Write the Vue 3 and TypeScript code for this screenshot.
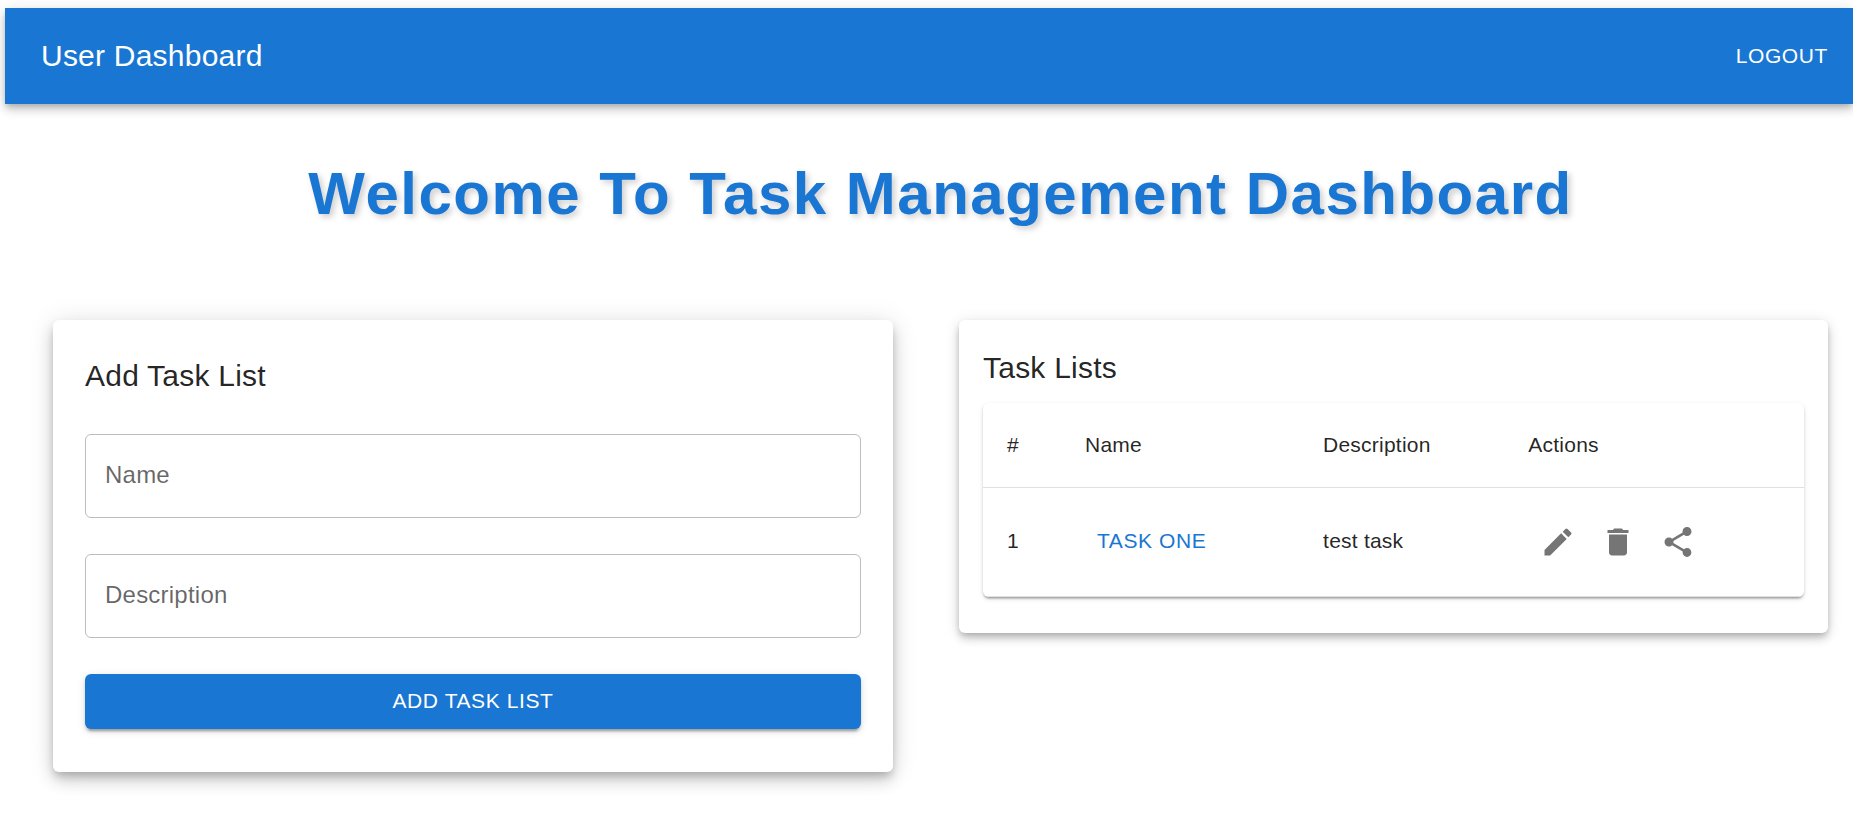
<script setup lang="ts">
import { ref } from 'vue'

interface TaskList {
  id: number
  name: string
  description: string
}

const name = ref('')
const description = ref('')
const lists = ref<TaskList[]>([{ id: 1, name: 'Task One', description: 'test task' }])

const actions = [
  {
    label: 'Edit',
    path: 'M3 17.25V21h3.75L17.81 9.94l-3.75-3.75L3 17.25zM20.71 7.04c.39-.39.39-1.02 0-1.41l-2.34-2.34a.9959.9959 0 0 0-1.41 0l-1.83 1.83 3.75 3.75 1.83-1.83z',
  },
  {
    label: 'Delete',
    path: 'M6 19c0 1.1.9 2 2 2h8c1.1 0 2-.9 2-2V7H6v12zM19 4h-3.5l-1-1h-5l-1 1H5v2h14V4z',
  },
  {
    label: 'Share',
    path: 'M18 16.08c-.76 0-1.44.3-1.96.77L8.91 12.7c.05-.23.09-.46.09-.7s-.04-.47-.09-.7l7.05-4.11c.54.5 1.25.81 2.04.81 1.66 0 3-1.34 3-3s-1.34-3-3-3-3 1.34-3 3c0 .24.04.47.09.7L8.04 9.81C7.5 9.31 6.79 9 6 9c-1.66 0-3 1.34-3 3s1.34 3 3 3c.79 0 1.5-.31 2.04-.81l7.12 4.16c-.05.21-.08.43-.08.65 0 1.61 1.31 2.92 2.92 2.92s2.92-1.31 2.92-2.92-1.31-2.92-2.92-2.92z',
  },
]

function addList() {
  if (!name.value) return
  lists.value.push({ id: lists.value.length + 1, name: name.value, description: description.value })
  name.value = ''
  description.value = ''
}
</script>

<template>
  <div class="page">
    <header class="app-bar">
      <span class="brand">User Dashboard</span>
      <button type="button" class="text-button logout">Logout</button>
    </header>

    <main class="content">
      <h1 class="welcome">Welcome To Task Management Dashboard</h1>

      <div class="columns">
        <form class="card form-card" @submit.prevent="addList">
          <h2 class="card-title">Add Task List</h2>
          <div class="fields">
            <div class="text-field" :class="{ filled: name }">
              <input id="list-name" v-model="name" type="text" />
              <label for="list-name">Name</label>
            </div>
            <div class="text-field" :class="{ filled: description }">
              <input id="list-description" v-model="description" type="text" />
              <label for="list-description">Description</label>
            </div>
            <button type="submit" class="submit">Add Task List</button>
          </div>
        </form>

        <section class="card list-card">
          <h2 class="card-title">Task Lists</h2>
          <div class="table-paper">
            <table>
              <colgroup>
                <col class="col-number" />
                <col class="col-name" />
                <col class="col-description" />
                <col />
              </colgroup>
              <thead>
                <tr>
                  <th scope="col">#</th>
                  <th scope="col">Name</th>
                  <th scope="col">Description</th>
                  <th scope="col">Actions</th>
                </tr>
              </thead>
              <tbody>
                <tr v-for="list in lists" :key="list.id">
                  <td>{{ list.id }}</td>
                  <td><button type="button" class="text-button link-button">{{ list.name }}</button></td>
                  <td>{{ list.description }}</td>
                  <td class="action-cell">
                    <div class="actions">
                      <button v-for="action in actions" :key="action.label" type="button" class="icon-button" :aria-label="action.label">
                        <svg viewBox="0 0 24 24" aria-hidden="true"><path :d="action.path" /></svg>
                      </button>
                    </div>
                  </td>
                </tr>
              </tbody>
            </table>
          </div>
        </section>
      </div>
    </main>
  </div>
</template>

<style>
body {
  margin: 0;
  background: #fff;
}
</style>

<style scoped>
.page {
  font-family: "Liberation Sans", Arial, sans-serif;
  color: rgba(0, 0, 0, 0.87);
  padding-top: 8px;
}

.page * {
  box-sizing: border-box;
}

button,
input {
  font-family: inherit;
  margin: 0;
}

button {
  border: 0;
  background: transparent;
  cursor: pointer;
}

.app-bar {
  display: flex;
  align-items: center;
  justify-content: space-between;
  min-height: 96px;
  margin-left: 5px;
  padding: 0 13px 0 36px;
  background: #1976d2;
  color: #fff;
  box-shadow: 0 3px 6px -2px rgba(0, 0, 0, 0.2), 0 6px 8px 0 rgba(0, 0, 0, 0.14), 0 2px 15px 0 rgba(0, 0, 0, 0.12);
}

.brand,
.card-title {
  font-size: 30px;
  font-weight: 400;
  line-height: 48px;
  letter-spacing: 0.0075em;
}

.text-button,
.submit {
  font-size: 21px;
  line-height: 37px;
  letter-spacing: 0.02857em;
  text-transform: uppercase;
  border-radius: 6px;
}

.text-button {
  padding: 8px 12px 10px;
}

.logout {
  color: #fff;
}

.content {
  padding: 54px 25px 43px 53px;
}

.welcome {
  margin: 0 0 90px;
  font-size: 60px;
  font-weight: 700;
  line-height: 72px;
  letter-spacing: 0.025em;
  text-align: center;
  color: #1976d2;
  text-shadow: 3px 3px 6px rgba(0, 0, 0, 0.2);
}

.columns {
  display: grid;
  grid-template-columns: minmax(0, 840fr) minmax(0, 869fr);
  gap: 66px;
  align-items: start;
}

.card {
  background: #fff;
  border-radius: 6px;
}

.card-title {
  margin: 0;
}

.form-card {
  padding: 32px 32px 43px;
  box-shadow: 0 5px 8px -2px rgba(0, 0, 0, 0.2), 0 9px 15px 0 rgba(0, 0, 0, 0.14), 0 2px 27px 0 rgba(0, 0, 0, 0.12);
}

.fields {
  display: flex;
  flex-direction: column;
  gap: 36px;
  margin-top: 34px;
}

.text-field {
  display: grid;
  align-items: center;
  justify-items: start;
}

.text-field input,
.text-field label {
  grid-area: 1 / 1;
  font-size: 24px;
  letter-spacing: 0.00938em;
}

.text-field input {
  width: 100%;
  height: 84px;
  padding: 0 20px;
  border: 1px solid rgba(0, 0, 0, 0.26);
  border-radius: 6px;
  background: transparent;
  color: inherit;
}

.text-field label {
  margin-left: 20px;
  padding-bottom: 2px;
  line-height: 36px;
  color: rgba(0, 0, 0, 0.6);
  pointer-events: none;
}

/* The label rests in the box and rises onto its border once the field is in use */
.text-field:focus-within label,
.text-field.filled label {
  align-self: start;
  margin-top: -14px;
  padding: 0 6px;
  font-size: 18px;
  line-height: 28px;
  background: #fff;
}

.submit {
  padding: 8px 24px 10px;
  background: #1976d2;
  color: #fff;
  box-shadow: 0 5px 2px -3px rgba(0, 0, 0, 0.2), 0 3px 3px 0 rgba(0, 0, 0, 0.14), 0 2px 8px 0 rgba(0, 0, 0, 0.12);
}

.list-card {
  padding: 24px 24px 36px;
  box-shadow: 0 3px 6px -2px rgba(0, 0, 0, 0.2), 0 6px 8px 0 rgba(0, 0, 0, 0.14), 0 2px 15px 0 rgba(0, 0, 0, 0.12);
}

.table-paper {
  margin-top: 11px;
  border-radius: 6px;
  overflow: hidden;
  box-shadow: 0 3px 2px -2px rgba(0, 0, 0, 0.2), 0 2px 2px 0 rgba(0, 0, 0, 0.14), 0 2px 5px 0 rgba(0, 0, 0, 0.12);
}

table {
  width: 100%;
  table-layout: fixed;
  border-collapse: collapse;
}

.col-number {
  width: 78px;
}

.col-name {
  width: 29%;
}

.col-description {
  width: 25%;
}

th,
td {
  padding: 24px;
  border-bottom: 1px solid #e0e0e0;
  font-size: 21px;
  font-weight: 400;
  line-height: 36px;
  letter-spacing: 0.01071em;
  text-align: left;
  white-space: nowrap;
}

td {
  padding: 23px 24px 25px;
  line-height: 30px;
}

.action-cell {
  padding: 24px;
}

.link-button {
  display: block;
  color: #1976d2;
}

.actions {
  display: flex;
}

.icon-button {
  display: flex;
  padding: 12px;
  border-radius: 50%;
}

.icon-button svg {
  width: 36px;
  height: 36px;
  fill: #757575;
}
</style>
